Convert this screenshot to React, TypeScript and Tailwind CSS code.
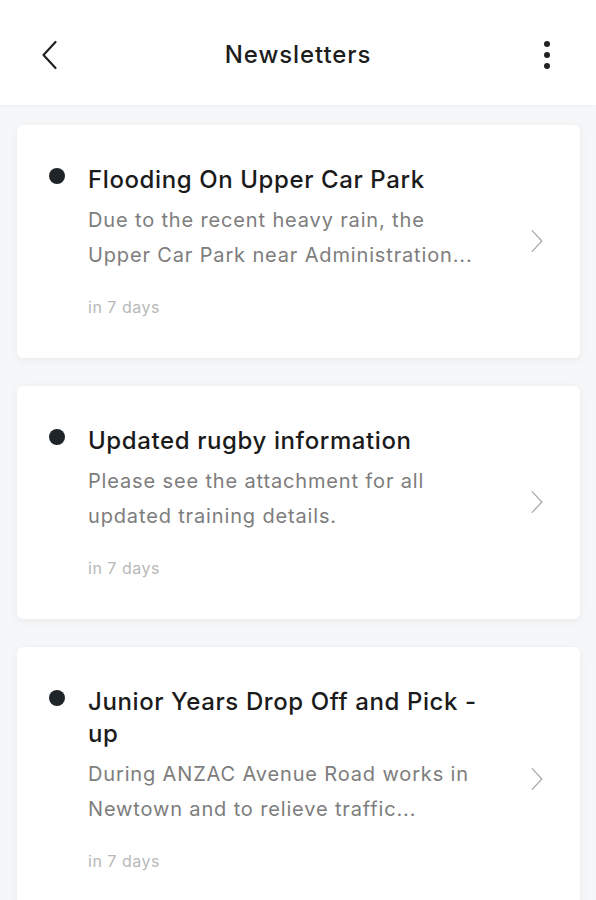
import React from "react";

type Item = {
  title: string[];
  body: string[];
  when: string;
};

const items: Item[] = [
  {
    title: ["Flooding On Upper Car Park"],
    body: ["Due to the recent heavy rain, the", "Upper Car Park near Administration..."],
    when: "in 7 days",
  },
  {
    title: ["Updated rugby information"],
    body: ["Please see the attachment for all", "updated training details."],
    when: "in 7 days",
  },
  {
    title: ["Junior Years Drop Off and Pick -", "up"],
    body: ["During ANZAC Avenue Road works in", "Newtown and to relieve traffic..."],
    when: "in 7 days",
  },
];

const Chevron = ({ dir, className }: { dir: "left" | "right"; className: string }) => (
  <svg viewBox="0 0 16 30" className={className} fill="none" stroke="currentColor" strokeLinecap="round" strokeLinejoin="round">
    {dir === "left" ? <path d="M14 2 L2 15 L14 28" strokeWidth="2.2" /> : <path d="M2 2 L14 15 L2 28" strokeWidth="1.6" />}
  </svg>
);

const Card = ({ item }: { item: Item }) => (
  <div className="bg-white rounded-md shadow-[0_2px_8px_rgba(0,0,0,0.06)] flex items-center pl-8 pr-9 pt-[39px] pb-[41px]">
    <div className="flex flex-1 items-start">
      <div className="w-4 h-4 rounded-full bg-[#1f2428] mt-[4px] shrink-0" />
      <div className="ml-[23px] flex flex-col">
        <div className="text-[24px] leading-[32px] text-[#1b1b1b] font-medium tracking-[0.6px]">
          {item.title.map((t) => (
            <div key={t}>{t}</div>
          ))}
        </div>
        <div className="mt-[7px] text-[20px] leading-[35px] text-[#7d7d7d] tracking-[0.85px]">
          {item.body.map((t) => (
            <div key={t}>{t}</div>
          ))}
        </div>
        <div className="mt-6 text-[16px] leading-5 text-[#b8b8b8] tracking-[0.5px]">{item.when}</div>
      </div>
    </div>
    <Chevron dir="right" className="w-[14px] h-[24px] text-[#a9a9a9] shrink-0" />
  </div>
);

const App = () => {
  return (
    <div className="min-h-screen bg-[#f6f7f8] font-['Inter',sans-serif]">
      <div className="h-[105px] bg-white flex items-center justify-between px-[41px] pt-[5px] shadow-[0_1px_3px_rgba(0,0,0,0.04)]">
        <Chevron dir="left" className="w-[17px] h-[30px] text-[#222]" />
        <h1 className="text-[24px] text-[#1d1d1d] font-medium tracking-[0.9px]">Newsletters</h1>
        <div className="flex flex-col items-center gap-[5px] w-[17px]">
          <div className="w-[6px] h-[6px] rounded-full bg-[#222]" />
          <div className="w-[6px] h-[6px] rounded-full bg-[#222]" />
          <div className="w-[6px] h-[6px] rounded-full bg-[#222]" />
        </div>
      </div>
      <div className="flex flex-col gap-7 pl-[17px] pr-4 pt-5 pb-6">
        {items.map((it) => (
          <Card key={it.title[0]} item={it} />
        ))}
      </div>
    </div>
  );
};

export default App;
